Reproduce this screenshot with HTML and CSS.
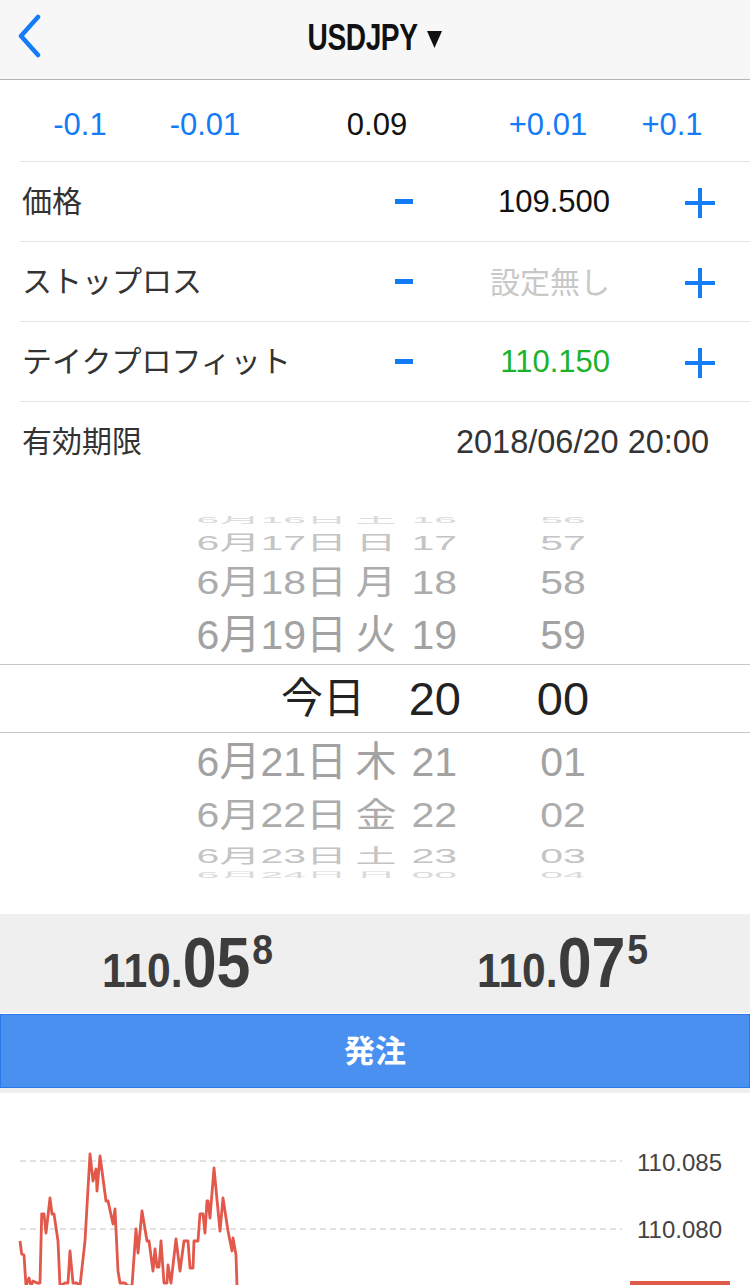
FILE: index.html
```html
<!DOCTYPE html>
<html lang="ja">
<head>
<meta charset="utf-8">
<title>USDJPY</title>
<link rel="stylesheet" href="styles.css">
</head>
<body>
<div class="screen">
  <header class="navbar">
    <svg class="back" width="30" height="44" viewBox="0 0 30 44"><path d="M22 3 L5 22 L22 41" fill="none" stroke="#147cf6" stroke-width="4.5" stroke-linecap="round" stroke-linejoin="round"/></svg>
    <div class="title"><span class="title-text">USDJPY</span><svg class="caret" width="15" height="17" viewBox="0 0 15 17"><polygon points="0,0 15,0 7.5,17" fill="#111"/></svg></div>
  </header>

  <div class="steps">
    <span class="step blue">-0.1</span>
    <span class="step blue">-0.01</span>
    <span class="step">0.09</span>
    <span class="step blue">+0.01</span>
    <span class="step blue">+0.1</span>
  </div>

  <div class="row">
    <span class="label">価格</span>
    <span class="minus"><i></i></span>
    <span class="value">109.500</span>
    <span class="plus"><svg width="32" height="32" viewBox="0 0 32 32"><path d="M16 1 V31 M1 16 H31" stroke="#147cf6" stroke-width="4"/></svg></span>
  </div>
  <div class="row">
    <span class="label">ストップロス</span>
    <span class="minus"><i></i></span>
    <span class="value none">設定無し</span>
    <span class="plus"><svg width="32" height="32" viewBox="0 0 32 32"><path d="M16 1 V31 M1 16 H31" stroke="#147cf6" stroke-width="4"/></svg></span>
  </div>
  <div class="row">
    <span class="label">テイクプロフィット</span>
    <span class="minus"><i></i></span>
    <span class="value green">110.150</span>
    <span class="plus"><svg width="32" height="32" viewBox="0 0 32 32"><path d="M16 1 V31 M1 16 H31" stroke="#147cf6" stroke-width="4"/></svg></span>
  </div>
  <div class="row last">
    <span class="label">有効期限</span>
    <span class="expiry">2018/06/20 20:00</span>
  </div>

  <div class="picker">
    <div class="prow p16"><span class="c-date">6月16日</span><span class="c-wd">土</span><span class="c-hr">16</span><span class="c-mn">56</span></div>
    <div class="prow p17"><span class="c-date">6月17日</span><span class="c-wd">日</span><span class="c-hr">17</span><span class="c-mn">57</span></div>
    <div class="prow p18"><span class="c-date">6月18日</span><span class="c-wd">月</span><span class="c-hr">18</span><span class="c-mn">58</span></div>
    <div class="prow p19"><span class="c-date">6月19日</span><span class="c-wd">火</span><span class="c-hr">19</span><span class="c-mn">59</span></div>
    <div class="prow psel"><span class="c-today">今日</span><span class="c-hr">20</span><span class="c-mn">00</span></div>
    <div class="prow p21"><span class="c-date">6月21日</span><span class="c-wd">木</span><span class="c-hr">21</span><span class="c-mn">01</span></div>
    <div class="prow p22"><span class="c-date">6月22日</span><span class="c-wd">金</span><span class="c-hr">22</span><span class="c-mn">02</span></div>
    <div class="prow p23"><span class="c-date">6月23日</span><span class="c-wd">土</span><span class="c-hr">23</span><span class="c-mn">03</span></div>
    <div class="prow p24"><span class="c-date">6月24日</span><span class="c-wd">日</span><span class="c-hr">00</span><span class="c-mn">04</span></div>
  </div>

  <div class="prices">
    <div class="price"><span class="p-small">110.</span><span class="p-big">05</span><span class="p-sup">8</span></div>
    <div class="price"><span class="p-small">110.</span><span class="p-big">07</span><span class="p-sup">5</span></div>
  </div>

  <button class="order">発注</button>

  <div class="chart">
    <svg width="750" height="193" viewBox="0 0 750 193">
      <line x1="20" y1="68" x2="622" y2="68" stroke="#c6c6c6" stroke-width="1.2" stroke-dasharray="6 4"/>
      <line x1="20" y1="136" x2="622" y2="136" stroke="#c6c6c6" stroke-width="1.2" stroke-dasharray="6 4"/>
      <text x="637" y="78" class="axis">110.085</text>
      <text x="637" y="145" class="axis">110.080</text>
      <polyline fill="none" stroke="#e2584a" stroke-width="2.8" stroke-linejoin="round" points="20,148 21.7,161 24,162 26,193 29,185 31,193 33,188 37,190 40,190 41.7,121 44,121 46,140 50,105 52,121 54,121 58,148 60,193 65,190 68,190 70,158 73,190 77,190 80,193 85,148 90,61 93,88 96,76 97,98 100,63 106,108 108,108 113,131 115,116 118,178 120,190 125,190 128,193 132,193 136,136 138,160 142,118 147,148 149,148 153,178 155,156 157,174 159,174 161,148 164,190 167,190 168,172 171,190 176,146 180,178 184,148 188,148 190,175 193,175 194,148 198,148 200,121 203,121 205,140 207,108 208,108 210,125 214,75 220,138 223,105 228,138 232,158 233,145 236,162 237,193 238,210"/>
      <rect x="630" y="188" width="100" height="10" fill="#e05a4a"/>
    </svg>
  </div>
</div>
</body>
</html>
```

FILE: styles.css
```css
* { box-sizing: border-box; }
html, body { margin: 0; padding: 0; background: #fff; }
body {
  font-family: "Liberation Sans", "Noto Sans CJK JP", sans-serif;
  color: #333;
}
.screen { width: 750px; height: 1285px; overflow: hidden; }

.navbar {
  height: 80px;
  background: #f7f7f8;
  border-bottom: 1px solid #b5b5b5;
  display: flex;
  align-items: center;
  justify-content: center;
  position: relative;
}
.back { position: absolute; left: 16px; top: 14px; }
.title { display: flex; align-items: center; margin-top: -4px; }
.title-text {
  display: inline-block;
  font-size: 36px;
  font-weight: bold;
  color: #111;
  transform: scaleX(0.78);
  transform-origin: center center;
  margin: 0 -16px;
  letter-spacing: -0.5px;
}
.caret { margin-left: 9px; margin-top: 4px; }

.steps {
  height: 82px;
  margin-left: 20px;
  display: grid;
  grid-template-columns: 120px 130px 214px 128px 120px;
  align-items: center;
  padding-top: 8px;
  border-bottom: 1px solid #e4e4e4;
}
.step { text-align: center; font-size: 31px; color: #111; }
.step.blue { color: #137cf5; }

.row {
  height: 80px;
  margin-left: 20px;
  display: grid;
  grid-template-columns: 354px 60px 236px 60px 20px;
  align-items: center;
  border-bottom: 1px solid #e6e6e6;
}
.row.last { border-bottom: none; display: flex; justify-content: space-between; align-items: center; padding-right: 41px; }
.label { font-size: 30px; color: #333; padding-left: 2px; padding-bottom: 6px; white-space: nowrap; }
.minus { display: flex; justify-content: center; }
.minus i { display: block; width: 18px; height: 5px; background: #137cf5; }
.value { text-align: right; padding-right: 60px; font-size: 31px; color: #111; white-space: nowrap; }
.value.none { color: #c8c8c8; font-size: 30px; padding-bottom: 4px; }
.value.green { color: #1bb32b; }
.plus { display: flex; justify-content: center; padding-top: 3px; }
.expiry { font-size: 32.5px; color: #333; }

.picker {
  margin-top: 34px;
  height: 362px;
  overflow: hidden;
}
.prow {
  display: grid;
  grid-template-columns: 347px 52px 62px 204px;
  align-items: center;
  font-size: 41px;
  color: #a2a2a2;
  line-height: 1;
  white-space: nowrap;
}
.c-date { text-align: right; }
.c-wd { text-align: center; padding-left: 6px; }
.c-hr { text-align: right; padding-right: 4px; }
.c-mn { text-align: center; }
.p16 { height: 14px; margin-top: -6px; transform: scaleY(0.22); color: #dadada; }
.p17 { height: 34px; transform: scaleY(0.5); color: #c4c4c4; }
.p18 { height: 49px; transform: scaleY(0.82); color: #acacac; }
.p19 { height: 57px; }
.psel {
  height: 69px;
  border-top: 1px solid #c8c8c8;
  border-bottom: 1px solid #c8c8c8;
  grid-template-columns: 399px 62px 204px;
  color: #222;
  font-size: 47px;
}
.c-today { text-align: right; padding-right: 34px; font-size: 42px; }
.psel .c-hr { padding-right: 0; }
.p21 { height: 59px; }
.p22 { height: 47px; transform: scaleY(0.84); color: #acacac; }
.p23 { height: 28px; transform: scaleY(0.48); color: #c4c4c4; }
.p24 { height: 11px; transform: scaleY(0.2); color: #dadada; }

.prices {
  margin-top: 36px;
  height: 99px;
  background: #efefef;
  display: grid;
  grid-template-columns: 1fr 1fr;
  align-items: center;
  padding-bottom: 1px;
}
.price {
  display: flex;
  align-items: baseline;
  justify-content: center;
  font-weight: bold;
  color: #3c3c3c;
  line-height: 1;
  transform: scaleX(0.87);
}
.p-small { font-size: 49px; }
.p-big { font-size: 70px; }
.p-sup { font-size: 43px; align-self: flex-start; margin-left: 2px; }

.order {
  display: block;
  width: 750px;
  height: 74px;
  margin: 1px 0 0;
  background: #4a90f0;
  border: 1px solid #2a79e6;
  color: #fff;
  font-family: "Liberation Sans", "Noto Sans CJK JP", sans-serif;
  font-size: 31px;
  font-weight: bold;
  padding: 0 0 5px;
}

.chart {
  border-top: 5px solid #efefef;
  height: 200px;
}
.chart svg { display: block; }
.axis { font-family: "Liberation Sans", sans-serif; font-size: 24px; fill: #444; }
```
